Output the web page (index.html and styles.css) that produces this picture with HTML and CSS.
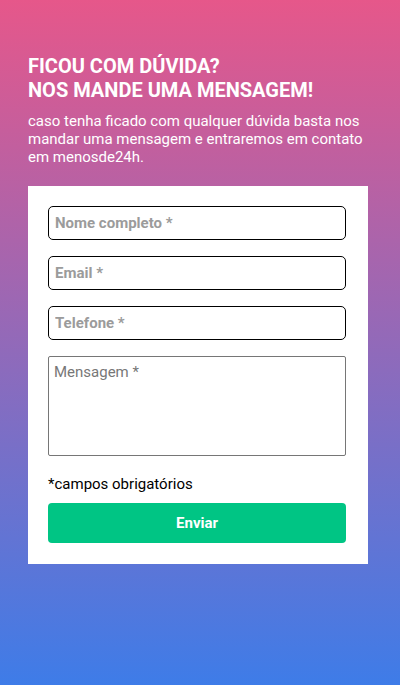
FILE: index.html
```html
<!DOCTYPE html>
<html lang="pt-BR">
<head>
<meta charset="utf-8">
<title>Contato</title>
<link rel="stylesheet" href="styles.css">
</head>
<body>
<main class="page">
  <h1 class="title">FICOU COM DÚVIDA?<br>NOS MANDE UMA MENSAGEM!</h1>
  <p class="lead">caso tenha ficado com qualquer dúvida basta nos mandar uma mensagem e entraremos em contato em menosde24h.</p>
  <form class="card">
    <input class="field" type="text" placeholder="Nome completo *">
    <input class="field" type="email" placeholder="Email *">
    <input class="field" type="tel" placeholder="Telefone *">
    <textarea class="message" placeholder="Mensagem *"></textarea>
    <p class="note">*campos obrigatórios</p>
    <button class="send" type="button">Enviar</button>
  </form>
</main>
</body>
</html>
```

FILE: styles.css
```css
html, body {
  margin: 0;
  height: 100%;
}
body {
  background: linear-gradient(180deg, #e6578a 0%, #3e7ce8 100%);
  font-family: Roboto, "Liberation Sans", sans-serif;
  color: #fff;
}
.page {
  padding: 54px 32px 0 28px;
}
.title {
  margin: 0;
  font-size: 20px;
  line-height: 24px;
  font-weight: 700;
}
.lead {
  margin: 10px 0 0;
  font-size: 15px;
  line-height: 18px;
}
.card {
  margin: 20px 0 0;
  width: 340px;
  box-sizing: border-box;
  background: #fff;
  padding: 20px 22px 21px 20px;
  display: flex;
  flex-direction: column;
}
.field {
  height: 34px;
  box-sizing: border-box;
  border: 1px solid #000;
  border-radius: 5px;
  padding: 0 6px;
  margin: 0 0 16px;
  font-family: Roboto, "Liberation Sans", sans-serif;
  font-size: 15px;
  font-weight: 700;
  color: #333;
  outline: none;
}
.field::placeholder {
  color: #9b9b9b;
  opacity: 1;
}
.message {
  height: 100px;
  box-sizing: border-box;
  border: 1px solid #767676;
  border-radius: 2px;
  padding: 6px 5px;
  margin: 0;
  resize: none;
  font-family: Roboto, "Liberation Sans", sans-serif;
  font-size: 15px;
  color: #333;
  outline: none;
}
.message::placeholder {
  color: #777;
  opacity: 1;
}
.note {
  margin: 19px 0 0;
  font-size: 15px;
  line-height: 18px;
  color: #000;
}
.send {
  margin-top: 10px;
  height: 40px;
  border: 0;
  border-radius: 4px;
  background: #00c584;
  color: #fff;
  font-family: Roboto, "Liberation Sans", sans-serif;
  font-size: 15px;
  font-weight: 700;
}
```
